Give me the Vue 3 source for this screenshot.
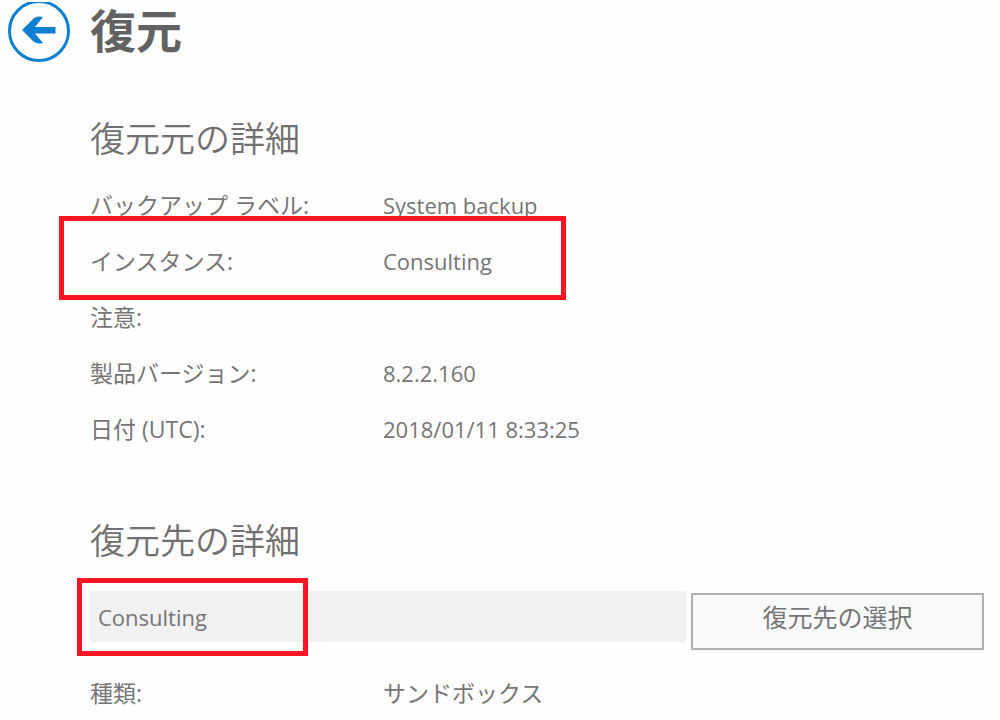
<script setup>
import { ref } from 'vue'

const source = [
  { label: 'バックアップ ラベル:', value: 'System backup' },
  { label: 'インスタンス:', value: 'Consulting', marked: true },
  { label: '注意:', value: '' },
  { label: '製品バージョン:', value: '8.2.2.160' },
  { label: '日付 (UTC):', value: '2018/01/11 8:33:25' },
]
const target = ref('Consulting')
</script>

<template>
  <main class="page">
    <header class="header">
      <button class="back" type="button" aria-label="戻る">
        <svg viewBox="0 2 62 60" width="62" height="60" aria-hidden="true">
          <circle cx="31" cy="31" r="29.5" fill="none" stroke="#0f7fd2" stroke-width="3" />
          <path d="M14 30 L25.500 18.500 Q29 15.500 35 17 L27 27 H47.500 V33.500 H27 L35 43 Q29 44.500 25.500 41.500 Z" fill="#0f7fd2" />
        </svg>
      </button>
      <h1>復元</h1>
    </header>

    <section class="section">
      <h2>復元元の詳細</h2>
      <dl class="details">
        <div v-for="row in source" :key="row.label" class="row" :class="{ marked: row.marked }">
          <dt>{{ row.label }}</dt>
          <dd>{{ row.value }}</dd>
        </div>
      </dl>
    </section>

    <section class="section target">
      <h2 id="target-title">復元先の詳細</h2>
      <div class="picker">
        <div class="field">
          <input v-model="target" type="text" readonly aria-labelledby="target-title" />
        </div>
        <button class="choose" type="button">復元先の選択</button>
      </div>
      <dl class="details kind">
        <div class="row">
          <dt>種類:</dt>
          <dd>サンドボックス</dd>
        </div>
      </dl>
    </section>
  </main>
</template>

<style>
body {
  background: #fefefe;
}
</style>

<style scoped>
.page {
  box-sizing: border-box;
  padding: 2px 16px 0 8px;
  color: #767676;
  font-family: "Open Sans", "Noto Sans CJK JP", sans-serif;
  font-size: 22px;
}
.header {
  display: flex;
  gap: 20px;
  height: 60px;
}
.back {
  flex: none;
  padding: 0;
  border: 0;
  background: none;
  cursor: pointer;
}
.back svg {
  display: block;
}
h1,
h2,
dl,
dd {
  margin: 0;
}
h1 {
  color: #626262;
  font-size: 46px;
  font-weight: 700;
  line-height: 56px;
}
h2 {
  color: #707070;
  font-size: 35px;
  font-weight: 350;
  line-height: 48px;
}
.section {
  margin: 53px 0 0 82px;
}
.target {
  margin-top: 60px;
}
.details {
  margin-top: 14px;
}
.row {
  position: relative;
  display: grid;
  grid-template-columns: 293px 1fr;
  height: 56px;
  line-height: 56px;
  white-space: nowrap;
}
.marked::after {
  content: "";
  position: absolute;
  top: -17px;
  left: -31px;
  width: 497px;
  height: 74px;
  border: 5px solid #fa1622;
}
dt {
  font-size: 23px;
}
.picker {
  display: grid;
  grid-template-columns: 1fr 293px;
  gap: 5px;
  align-items: start;
  margin-top: 26px;
}
.field {
  position: relative;
}
.field::after {
  content: "";
  position: absolute;
  top: -13px;
  left: -13px;
  width: 221px;
  height: 68px;
  border: 5px solid #fa1622;
  pointer-events: none;
}
input {
  display: block;
  box-sizing: border-box;
  width: 100%;
  height: 51px;
  padding: 0 8px;
  border: 0;
  background: #f1f1f1;
  color: inherit;
  font: inherit;
}
.choose {
  height: 57px;
  margin-top: 2px;
  padding: 0 0 12px;
  border: 2px solid #acb1b0;
  background: #f8faf9;
  color: inherit;
  font-family: inherit;
  font-size: 25px;
  cursor: pointer;
}
.kind {
  margin-top: 17px;
}
.kind .row {
  height: 52px;
  line-height: 52px;
}
.kind dd {
  font-size: 23px;
}
</style>
